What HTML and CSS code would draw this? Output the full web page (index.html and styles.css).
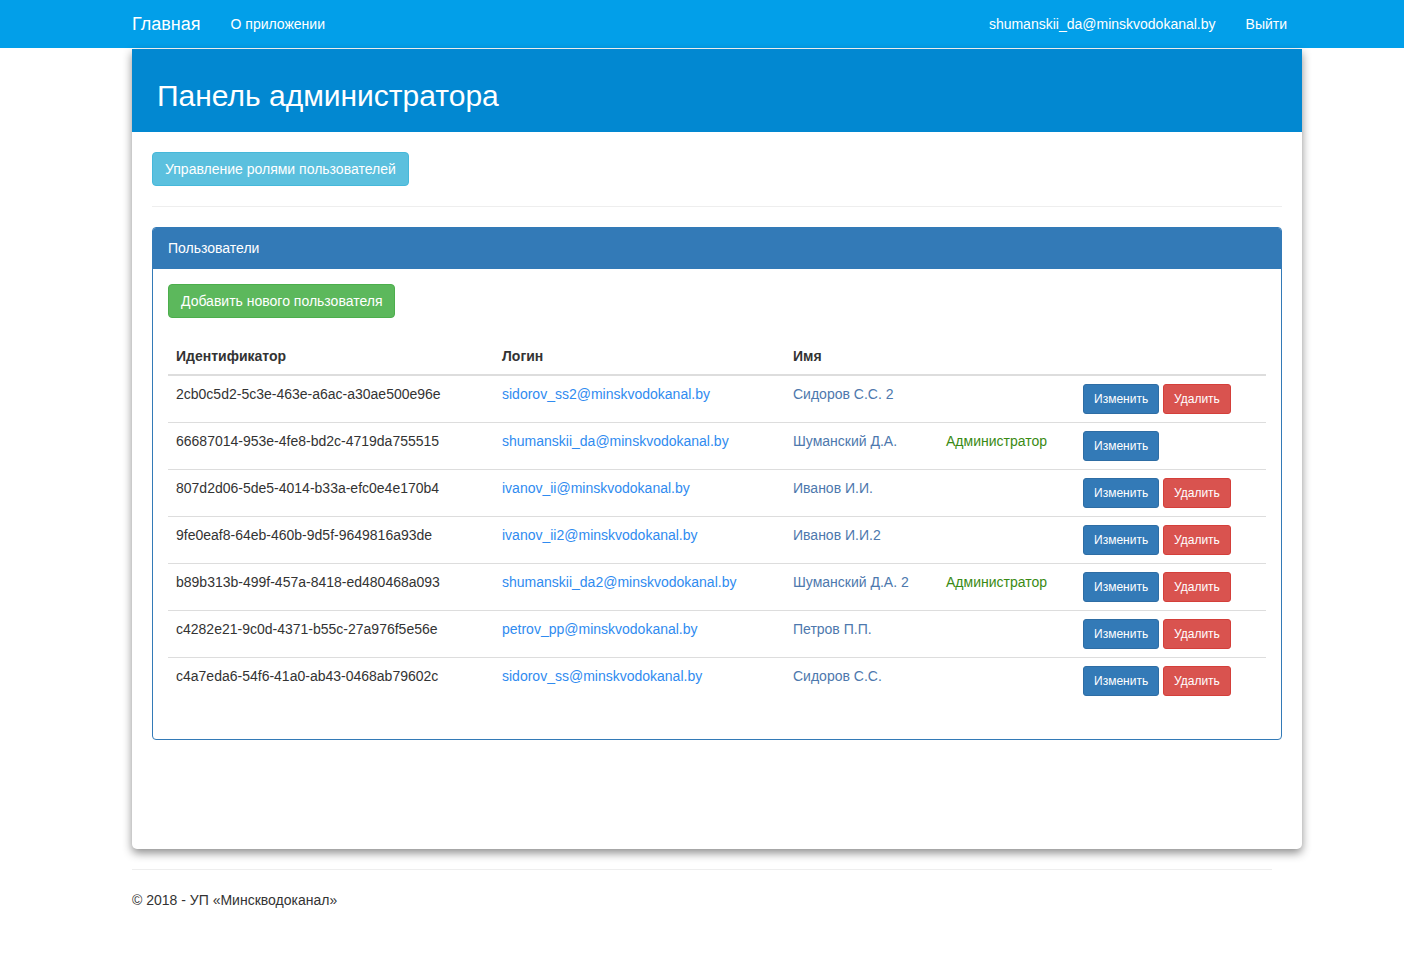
FILE: index.html
```html
<!DOCTYPE html>
<html lang="ru">
<head>
<meta charset="utf-8">
<title>Панель администратора</title>
<link rel="stylesheet" href="styles.css">
</head>
<body>
<nav class="navbar">
  <div class="nav-inner">
    <div class="nav-left">
      <a class="brand" href="#">Главная</a>
      <a class="nav-link" href="#">О приложении</a>
    </div>
    <div class="nav-right">
      <a class="nav-link" href="#">shumanskii_da@minskvodokanal.by</a>
      <a class="nav-link" href="#">Выйти</a>
    </div>
  </div>
</nav>

<main class="card">
  <header class="card-header">
    <h1 class="card-title">Панель администратора</h1>
  </header>
  <div class="card-body">
    <a class="btn btn-info" href="#">Управление ролями пользователей</a>
    <hr class="sep">
    <section class="panel">
      <div class="panel-heading">Пользователи</div>
      <div class="panel-body">
        <div class="add-row"><a class="btn btn-success" href="#">Добавить нового пользователя</a></div>
        <table class="users">
          <thead>
            <tr>
              <th class="c-id">Идентификатор</th>
              <th class="c-login">Логин</th>
              <th class="c-name">Имя</th>
              <th class="c-role"></th>
              <th class="c-act"></th>
            </tr>
          </thead>
          <tbody>
            <tr>
              <td>2cb0c5d2-5c3e-463e-a6ac-a30ae500e96e</td>
              <td><a class="login" href="#">sidorov_ss2@minskvodokanal.by</a></td>
              <td class="name">Сидоров С.С. 2</td>
              <td class="role"></td>
              <td class="act"><a class="btn btn-sm btn-primary" href="#">Изменить</a> <a class="btn btn-sm btn-danger" href="#">Удалить</a></td>
            </tr>
            <tr>
              <td>66687014-953e-4fe8-bd2c-4719da755515</td>
              <td><a class="login" href="#">shumanskii_da@minskvodokanal.by</a></td>
              <td class="name">Шуманский Д.А.</td>
              <td class="role">Администратор</td>
              <td class="act"><a class="btn btn-sm btn-primary" href="#">Изменить</a></td>
            </tr>
            <tr>
              <td>807d2d06-5de5-4014-b33a-efc0e4e170b4</td>
              <td><a class="login" href="#">ivanov_ii@minskvodokanal.by</a></td>
              <td class="name">Иванов И.И.</td>
              <td class="role"></td>
              <td class="act"><a class="btn btn-sm btn-primary" href="#">Изменить</a> <a class="btn btn-sm btn-danger" href="#">Удалить</a></td>
            </tr>
            <tr>
              <td>9fe0eaf8-64eb-460b-9d5f-9649816a93de</td>
              <td><a class="login" href="#">ivanov_ii2@minskvodokanal.by</a></td>
              <td class="name">Иванов И.И.2</td>
              <td class="role"></td>
              <td class="act"><a class="btn btn-sm btn-primary" href="#">Изменить</a> <a class="btn btn-sm btn-danger" href="#">Удалить</a></td>
            </tr>
            <tr>
              <td>b89b313b-499f-457a-8418-ed480468a093</td>
              <td><a class="login" href="#">shumanskii_da2@minskvodokanal.by</a></td>
              <td class="name">Шуманский Д.А. 2</td>
              <td class="role">Администратор</td>
              <td class="act"><a class="btn btn-sm btn-primary" href="#">Изменить</a> <a class="btn btn-sm btn-danger" href="#">Удалить</a></td>
            </tr>
            <tr>
              <td>c4282e21-9c0d-4371-b55c-27a976f5e56e</td>
              <td><a class="login" href="#">petrov_pp@minskvodokanal.by</a></td>
              <td class="name">Петров П.П.</td>
              <td class="role"></td>
              <td class="act"><a class="btn btn-sm btn-primary" href="#">Изменить</a> <a class="btn btn-sm btn-danger" href="#">Удалить</a></td>
            </tr>
            <tr>
              <td>c4a7eda6-54f6-41a0-ab43-0468ab79602c</td>
              <td><a class="login" href="#">sidorov_ss@minskvodokanal.by</a></td>
              <td class="name">Сидоров С.С.</td>
              <td class="role"></td>
              <td class="act"><a class="btn btn-sm btn-primary" href="#">Изменить</a> <a class="btn btn-sm btn-danger" href="#">Удалить</a></td>
            </tr>
          </tbody>
        </table>
      </div>
    </section>
  </div>
</main>

<footer class="footer">
  <hr class="foot-sep">
  <p class="copy">© 2018 - УП «Минскводоканал»</p>
</footer>
</body>
</html>
```

FILE: styles.css
```css
* { box-sizing: border-box; }

html, body {
  margin: 0;
  padding: 0;
  background: #fff;
}

body {
  font-family: "Liberation Sans", Arial, sans-serif;
  font-size: 14px;
  line-height: 20px;
  color: #333;
}

a { text-decoration: none; }

/* Navbar */
.navbar {
  height: 48px;
  background: #029fe9;
  border-bottom: 1px solid #fff;
  box-sizing: content-box;
}

.nav-inner {
  width: 1140px;
  margin: 0 auto;
  height: 48px;
  display: flex;
  justify-content: space-between;
  align-items: center;
}

.nav-left, .nav-right {
  display: flex;
  align-items: center;
}

.nav-left { margin-left: -15px; }
.nav-right { margin-right: -30px; }

.brand {
  color: #fff;
  font-size: 18px;
  line-height: 20px;
  padding: 14px 15px;
}

.nav-link {
  color: #fff;
  font-size: 14px;
  line-height: 20px;
  padding: 14px 15px;
}

/* Card */
.card {
  width: 1170px;
  margin: 0 0 0 calc(50% - 570px);
  background: #fff;
  border-radius: 0 0 5px 5px;
  box-shadow: 0 4px 10px rgba(0, 0, 0, 0.45);
}

.card-header {
  height: 83px;
  background: #0288d1;
  display: flex;
  align-items: center;
  padding: 0 25px;
}

.card-title {
  margin: 0;
  font-weight: normal;
  font-size: 30px;
  line-height: 36px;
  color: #fff;
  padding-top: 10px;
}

.card-body {
  padding: 20px 20px 109px;
}

/* Buttons */
.btn {
  display: inline-block;
  padding: 6px 12px;
  font-size: 14px;
  line-height: 20px;
  border: 1px solid transparent;
  border-radius: 4px;
  color: #fff;
  white-space: nowrap;
  vertical-align: middle;
}

.btn-info { background: #5bc0de; border-color: #46b8da; }
.btn-success { background: #5cb85c; border-color: #4cae4c; }
.btn-primary { background: #337ab7; border-color: #2e6da4; }
.btn-danger { background: #d9534f; border-color: #d43f3a; }

.btn-sm {
  padding: 5px 10px;
  font-size: 12px;
  line-height: 18px;
  border-radius: 3px;
}

.sep {
  margin: 20px 0;
  border: 0;
  border-top: 1px solid #eee;
  height: 0;
}

/* Panel */
.panel {
  border: 1px solid #337ab7;
  border-radius: 4px;
}

.panel-heading {
  background: #337ab7;
  color: #fff;
  padding: 10px 15px 11px;
  line-height: 20px;
  border-radius: 3px 3px 0 0;
}

.panel-body {
  padding: 15px;
}

.add-row {
  margin-bottom: 20px;
}

/* Table */
.users {
  width: 100%;
  border-collapse: collapse;
  margin-bottom: 20px;
}

.users th {
  text-align: left;
  font-weight: bold;
  padding: 8px;
  line-height: 20px;
  border-bottom: 2px solid #ddd;
}

.users td {
  padding: 8px;
  line-height: 20px;
  vertical-align: top;
  border-top: 1px solid #ddd;
}

.users tbody tr:first-child td { border-top: 0; }

.c-id { width: 326px; }
.c-login { width: 291px; }
.c-name { width: 153px; }
.c-role { width: 137px; }

.login { color: #2f8bf0; }
.name { color: #4d78ad; }
.role { color: #3a8a14; }

.act { white-space: nowrap; }

/* Footer */
.footer {
  width: 1140px;
  margin: 0 auto;
}

.foot-sep {
  margin: 20px 0;
  border: 0;
  border-top: 1px solid #eee;
  height: 0;
}

.copy {
  margin: 0;
  line-height: 20px;
}
```
